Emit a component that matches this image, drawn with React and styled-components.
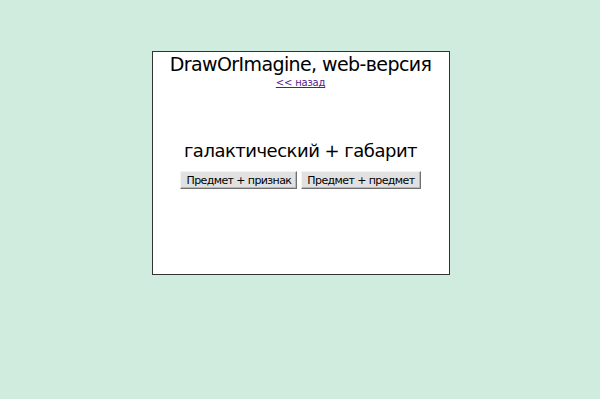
import React from 'react';
import styled, { createGlobalStyle } from 'styled-components';

const Global = createGlobalStyle`
  html, body {
    margin: 0;
    padding: 0;
    background: #d0ecdf;
  }
  body {
    font-family: "DejaVu Sans", Verdana, sans-serif;
  }
`;

const Page = styled.div`
  padding: 51px 0 0 1px;
  height: 399px;
  box-sizing: border-box;
`;

const Card = styled.div`
  width: 298px;
  height: 224px;
  box-sizing: border-box;
  margin: 0 auto;
  background: #fff;
  border: 1px solid #333;
  text-align: center;
`;

const Title = styled.h1`
  margin: 1px 0 0;
  font-size: 19px;
  font-weight: normal;
  line-height: 22px;
  color: #000;
  letter-spacing: -0.6px;
`;

const BackRow = styled.div`
  margin-top: 2px;
  font-size: 10px;
  line-height: 12px;
`;

const Back = styled.a`
  color: #551a8b;
  text-decoration: underline;
  letter-spacing: -0.2px;
`;

const Pair = styled.div`
  margin-top: 51px;
  font-size: 18px;
  line-height: 22px;
  color: #000;
  letter-spacing: -0.5px;
`;

const Buttons = styled.div`
  margin-top: 9px;
  display: flex;
  justify-content: center;
  gap: 4px;
`;

const Button = styled.button`
  font-family: "DejaVu Sans", Verdana, sans-serif;
  font-size: 11px;
  height: 18px;
  padding: 0 5px;
  background: #e1e1e1;
  color: #000;
  border: 1px solid;
  border-color: #f4f4f4 #707070 #707070 #f4f4f4;
  box-shadow: inset -1px -1px 0 #b8b8b8;
  letter-spacing: -0.6px;
`;

export default function App() {
  return (
    <>
      <Global />
      <Page>
        <Card>
          <Title>DrawOrImagine, web-версия</Title>
          <BackRow>
            <Back href="#">&lt;&lt; назад</Back>
          </BackRow>
          <Pair>галактический + габарит</Pair>
          <Buttons>
            <Button>Предмет + признак</Button>
            <Button>Предмет + предмет</Button>
          </Buttons>
        </Card>
      </Page>
    </>
  );
}
